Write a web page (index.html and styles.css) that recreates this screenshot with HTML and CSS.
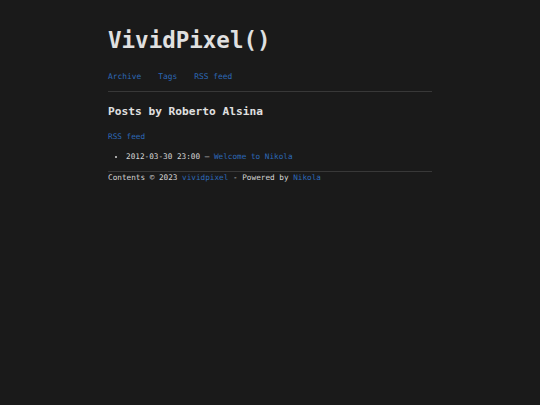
FILE: index.html
```html
<!DOCTYPE html>
<html>
<head>
<meta charset="utf-8">
<link rel="stylesheet" href="styles.css">
</head>
<body>
<div class="page">
  <header class="site-header">
    <h1 class="brand">VividPixel()</h1>
    <nav class="nav">
      <a href="#">Archive</a>
      <a href="#">Tags</a>
      <a href="#">RSS feed</a>
    </nav>
  </header>
  <main class="content">
    <h2 class="title">Posts by Roberto Alsina</h2>
    <p class="feed"><a href="#">RSS feed</a></p>
    <ul class="posts">
      <li>2012-03-30 23:00 — <a href="#">Welcome to Nikola</a></li>
    </ul>
  </main>
  <footer class="footer">Contents © 2023 <a href="#">vividpixel</a> - Powered by <a href="#">Nikola</a></footer>
</div>
</body>
</html>
```
FILE: styles.css
```css
html, body {
  margin: 0;
  padding: 0;
  background: #1a1a1a;
}
body {
  font-family: "DejaVu Sans Mono", monospace;
  color: #d6d6d6;
  font-size: 7.7px;
}
a {
  color: #2d69b8;
  text-decoration: none;
}
.page {
  width: 324px;
  margin: 0 auto;
  padding-top: 25px;
}
.brand {
  margin: 0;
  font-size: 22.5px;
  font-weight: bold;
  line-height: 30px;
  color: #e0e0e0;
}
.nav {
  display: flex;
  gap: 17px;
  margin-top: 16px;
  padding-bottom: 8px;
  border-bottom: 1px solid #383838;
  font-size: 7.9px;
  line-height: 12px;
}
.content {
  padding-top: 11px;
}
.title {
  margin: 0;
  font-size: 11.2px;
  font-weight: bold;
  line-height: 18px;
  color: #e0e0e0;
}
.feed {
  margin: 10px 0 0;
  line-height: 12px;
}
.posts {
  margin: 8px 0 0;
  padding-left: 18px;
  line-height: 12px;
}
.footer {
  margin-top: 8px;
  border-top: 1px solid #383838;
  line-height: 12px;
}
```
